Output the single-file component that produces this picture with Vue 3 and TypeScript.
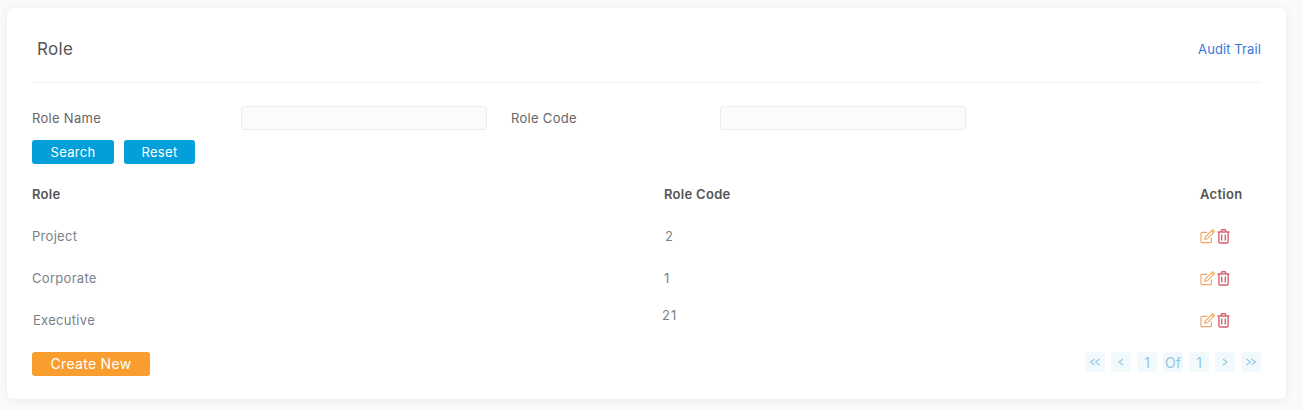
<template>
  <div class="page">
    <section class="card">
      <header class="card-head">
        <h1 class="title">Role</h1>
        <a class="audit">Audit Trail</a>
      </header>

      <form class="filters" @submit.prevent>
        <label class="field-label">Role Name</label>
        <input class="field-input" type="text" />
        <label class="field-label field-label-second">Role Code</label>
        <input class="field-input" type="text" />
      </form>

      <div class="filter-actions">
        <button class="btn btn-blue btn-search" type="button">Search</button>
        <button class="btn btn-blue btn-reset" type="button">Reset</button>
      </div>

      <div class="table">
        <div class="row row-head">
          <div>Role</div>
          <div>Role Code</div>
          <div>Action</div>
        </div>
        <div v-for="item in roles" :key="item.code" class="row" :class="item.rowClass">
          <div class="cell-name">{{ item.name }}</div>
          <div class="cell-code">{{ item.code }}</div>
          <div class="cell-action">
            <svg class="icon" width="15" height="15" viewBox="0 0 15 15" fill="none" stroke="#f3a566" stroke-width="1.2">
              <path d="M11.4 8.4v4a1.3 1.3 0 0 1-1.3 1.3H2.3A1.3 1.3 0 0 1 1 12.4V4.7a1.3 1.3 0 0 1 1.3-1.3h5" />
              <path d="M5.4 7.9 11.4 1.9l1.9 1.9-6 6-2.4.5z" />
              <path d="M11.6 1.6l.5-.5a.9.9 0 0 1 1.3 0l.5.5a.9.9 0 0 1 0 1.3l-.5.5" stroke="#f0b040" />
            </svg>
            <svg class="icon" width="13" height="15" viewBox="0 0 13 15" fill="none" stroke="#d9606c" stroke-width="1.4">
              <path d="M.5 3h12" />
              <path d="M4.3 3V1.6a.8.8 0 0 1 .8-.8h2.8a.8.8 0 0 1 .8.8V3" />
              <path d="M1.9 3v9.8a1.2 1.2 0 0 0 1.2 1.2h6.8a1.2 1.2 0 0 0 1.2-1.2V3" />
              <path d="M4.7 5.6v5.8M8.3 5.6v5.8" />
            </svg>
          </div>
        </div>
      </div>

      <footer class="card-foot">
        <button class="btn btn-orange" type="button">Create New</button>
        <nav class="pager">
          <span v-for="(p, i) in pager" :key="i" class="page-item">
            <svg v-if="p.path" width="14" height="10" viewBox="0 0 14 10" fill="none" stroke="#93c6e3" stroke-width="1.1">
              <path :d="p.path" />
            </svg>
            <template v-else>{{ p.label }}</template>
          </span>
        </nav>
      </footer>
    </section>
  </div>
</template>

<script setup lang="ts">
const roles = [
  { name: 'Project', code: '2', rowClass: 'row-project' },
  { name: 'Corporate', code: '1', rowClass: '' },
  { name: 'Executive', code: '21', rowClass: 'row-executive' }
]

// chevrons are drawn, the page numbers stay text
const pager = [
  { path: 'M6.5 2 2.5 5l4 3M11.5 2l-4 3 4 3' },
  { path: 'M9 2 5 5l4 3' },
  { label: '1' },
  { label: 'Of' },
  { label: '1' },
  { path: 'M5 2l4 3-4 3' },
  { path: 'M2.5 2l4 3-4 3M7.5 2l4 3-4 3' }
]
</script>

<style>
html,
body {
  margin: 0;
  background: #fafafa;
}
</style>

<style scoped>
.page {
  width: 1303px;
  height: 410px;
  padding: 8px 17px 0 7px;
  box-sizing: border-box;
  font-family: Inter, "Open Sans", "Liberation Sans", sans-serif;
  font-size: 13px;
  letter-spacing: 0.3px;
  color: #7a8187;
}

.card {
  height: 391px;
  box-sizing: border-box;
  padding: 0 25px;
  background: #fff;
  border-radius: 6px;
  box-shadow: 0 1px 8px rgba(0, 0, 0, 0.07);
}

.card-head {
  height: 75px;
  box-sizing: border-box;
  display: flex;
  align-items: center;
  justify-content: space-between;
  border-bottom: 1px solid #f1f1f1;
  padding-top: 8px;
}

.title {
  margin: 0 0 0 5px;
  font-size: 17px;
  font-weight: 400;
  letter-spacing: 0.3px;
  color: #555;
}

.audit {
  color: #3a78d8;
  letter-spacing: 0.1px;
  padding-bottom: 1px;
}

.filters {
  display: grid;
  grid-template-columns: 209px 246px 233px 246px;
  align-items: center;
  margin-top: 23px;
}

.field-label {
  color: #666;
  padding-bottom: 1px;
}

.field-label-second {
  margin-left: 24px;
}

.field-input {
  height: 24px;
  box-sizing: border-box;
  background: #fbfbfb;
  border: 1px solid #ececec;
  border-radius: 3px;
  outline: none;
}

.filter-actions {
  display: flex;
  gap: 10px;
  margin-top: 10px;
}

.btn {
  height: 24px;
  border: 0;
  border-radius: 3px;
  color: #fff;
  font-family: inherit;
  font-size: 13px;
  letter-spacing: 0.3px;
  padding: 0 0 1px;
}

.btn-blue {
  background: #039fdb;
}

.btn-search {
  width: 82px;
}

.btn-reset {
  width: 71px;
}

.btn-orange {
  width: 118px;
  background: #fa9d2f;
  font-size: 14px;
}

.table {
  margin-top: 9px;
}

.row {
  display: grid;
  grid-template-columns: 632px 536px 1fr;
  height: 42px;
  align-items: center;
}

.row-head {
  font-weight: 600;
  color: #555;
}

.row-project .cell-code {
  margin-left: 1px;
}

.row-executive .cell-name {
  margin-left: 1px;
}

.row-executive .cell-code {
  margin: -10px 0 0 -2px;
  letter-spacing: 1px;
}

.cell-action {
  display: flex;
  gap: 2px;
  align-items: center;
}

.card-foot {
  display: flex;
  align-items: flex-start;
  justify-content: space-between;
  margin-top: 11px;
}

.pager {
  display: flex;
  gap: 6px;
}

.page-item {
  width: 20px;
  height: 20px;
  display: flex;
  align-items: center;
  justify-content: center;
  background: #f2f9fd;
  border-radius: 4px;
  color: #93c6e3;
  font-size: 14px;
  letter-spacing: 0;
}
</style>
